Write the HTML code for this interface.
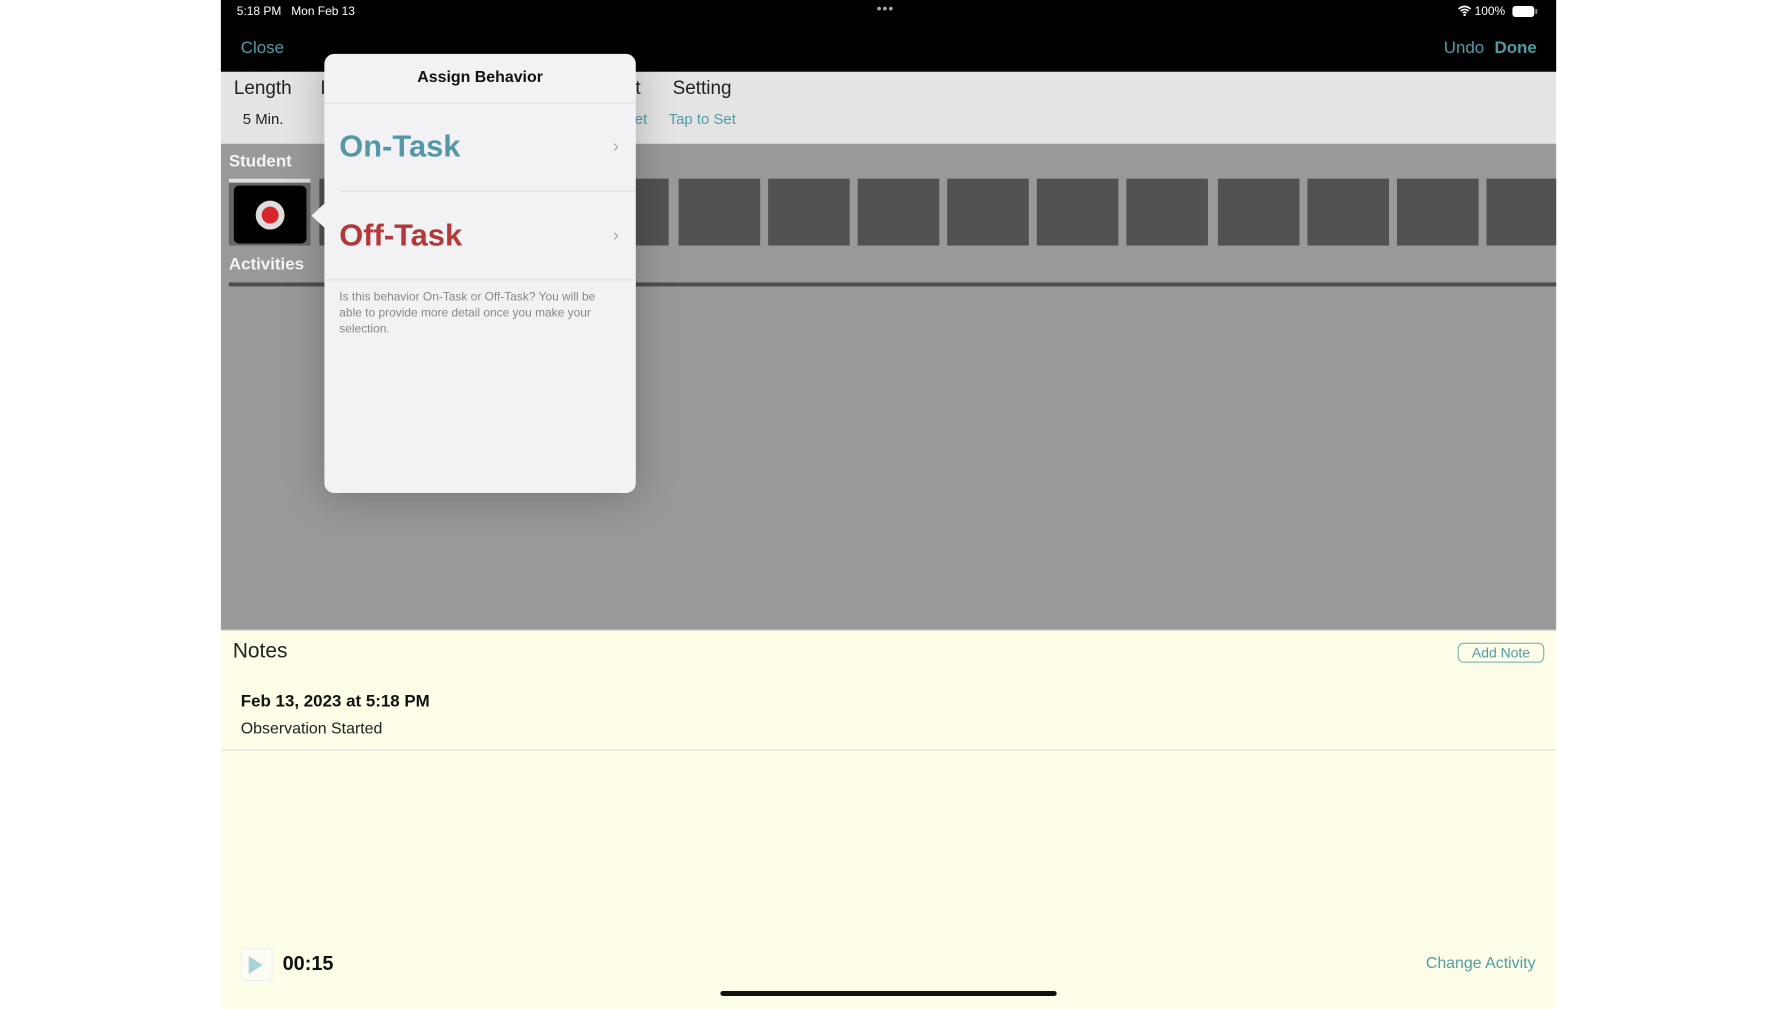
<!DOCTYPE html>
<html><head><meta charset="utf-8"><style>
*{margin:0;padding:0;box-sizing:border-box}
body{width:1778px;height:1000px;background:#fff;position:relative;overflow:hidden;font-family:"Liberation Sans",sans-serif}
#w{position:absolute;left:0;top:0;width:1778px;height:1010px;transform:scale(0.995,0.998);transform-origin:0 0}
.a{position:absolute;white-space:nowrap}
.teal{color:#4f9ea6}
.tile{position:absolute;top:179px;width:82px;height:67px;background:#525252}
</style></head><body><div id="w">
<div class="a" style="left:222px;top:0;width:1342px;height:72px;background:#000"></div>
<div class="a" style="left:238px;top:4px;color:#fff;font-size:12px">5:18 PM&nbsp;&nbsp;&nbsp;Mon Feb 13</div>
<div class="a" style="left:881px;top:0px;color:#aaa;font-size:14px;letter-spacing:1px">•••</div>
<div class="a" style="left:1482px;top:4px;color:#fff;font-size:12px">100%</div>
<svg class="a" style="left:1465px;top:5px" width="14" height="11" viewBox="0 0 14 11"><path d="M1 4Q7-1 13 4M3 6Q7 3 11 6M5 8Q7 6.5 9 8" stroke="#fff" stroke-width="1.6" fill="none"/><circle cx="7" cy="10" r="1.2" fill="#fff"/></svg>
<div class="a" style="left:1520px;top:6px;width:22px;height:11px;background:#fff;border-radius:3px"></div>
<div class="a" style="left:1543px;top:9px;width:2px;height:5px;background:#888"></div>
<div class="a teal" style="left:242px;top:38px;font-size:17px">Close</div>
<div class="a teal" style="left:1451px;top:38px;font-size:17px">Undo</div>
<div class="a teal" style="left:1502px;top:38px;font-size:17px;font-weight:bold">Done</div>

<div class="a" style="left:222px;top:72px;width:1342px;height:72px;background:#e4e4e4"></div>
<div class="a" style="left:235px;top:78px;font-size:19px;color:#222">Length</div>
<div class="a" style="left:322px;top:78px;font-size:19px;color:#222">I</div>
<div class="a" style="left:244px;top:111px;font-size:15px;color:#222">5 Min.</div>
<div class="a" style="left:628px;top:78px;font-size:19px;color:#222">nt</div>
<div class="a" style="left:676px;top:78px;font-size:19px;color:#222">Setting</div>
<div class="a teal" style="left:638px;top:111px;font-size:15px">et</div>
<div class="a teal" style="left:672px;top:111px;font-size:15px">Tap to Set</div>

<div class="a" style="left:222px;top:144px;width:1342px;height:488px;background:#999"></div>
<div class="a" style="left:230px;top:152px;font-size:17px;font-weight:bold;color:#f4f4f4">Student</div>
<div class="a" style="left:230px;top:179px;width:82px;height:67px;background:#666"></div>
<div class="a" style="left:230px;top:179px;width:82px;height:4px;background:#ddd"></div>
<div class="a" style="left:235px;top:186px;width:73px;height:58px;background:#000;border-radius:5px"></div>
<div class="a" style="left:257px;top:201px;width:29px;height:29px;border-radius:50%;background:#ddd"></div>
<div class="a" style="left:263px;top:207px;width:17px;height:17px;border-radius:50%;background:#d8262c"></div>
<div class="tile" style="left:321px"></div>
<div class="tile" style="left:592px;width:80px"></div>
<div class="tile" style="left:682px"></div><div class="tile" style="left:772px"></div><div class="tile" style="left:862px"></div><div class="tile" style="left:952px"></div><div class="tile" style="left:1042px"></div><div class="tile" style="left:1132px"></div><div class="tile" style="left:1224px"></div><div class="tile" style="left:1314px"></div><div class="tile" style="left:1404px"></div><div class="tile" style="left:1494px;width:70px"></div>
<div class="a" style="left:230px;top:255px;font-size:17px;font-weight:bold;color:#f4f4f4">Activities</div>
<div class="a" style="left:230px;top:283px;width:1334px;height:4px;background:#4e4e4e"></div>

<div class="a" style="left:222px;top:631px;width:1342px;height:380px;background:#fdfde8;border-top:1px solid #ccc"></div>
<div class="a" style="left:234px;top:641px;font-size:21px;color:#222">Notes</div>
<div class="a teal" style="left:1465px;top:644px;width:87px;height:20px;border:1px solid #6aaab0;border-radius:6px;font-size:14px;text-align:center;line-height:18px">Add Note</div>
<div class="a" style="left:242px;top:693px;font-size:17px;font-weight:bold;color:#111">Feb 13, 2023 at 5:18 PM</div>
<div class="a" style="left:242px;top:722px;font-size:16px;color:#222">Observation Started</div>
<div class="a" style="left:222px;top:751px;width:1342px;height:1px;background:#ddd"></div>
<div class="a" style="left:242px;top:950px;width:32px;height:33px;border:1px solid #eee;border-radius:3px;background:#fcfcf4"></div>
<div class="a" style="left:250px;top:958px;width:0;height:0;border-left:14px solid #a9d3d8;border-top:9px solid transparent;border-bottom:9px solid transparent"></div>
<div class="a" style="left:284px;top:955px;font-size:20px;font-weight:bold;color:#111">00:15</div>
<div class="a teal" style="left:1433px;top:957px;font-size:16px">Change Activity</div>
<div class="a" style="left:724px;top:993px;width:338px;height:5px;border-radius:3px;background:#111"></div>

<div class="a" style="left:326px;top:54px;width:313px;height:440px;background:#f2f2f4;border-radius:10px;box-shadow:0 4px 40px rgba(0,0,0,.25)"></div>
<div class="a" style="left:313px;top:203px;width:0;height:0;border-right:14px solid #f2f2f4;border-top:13px solid transparent;border-bottom:13px solid transparent"></div>
<div class="a" style="left:326px;top:69px;width:313px;text-align:center;font-size:16px;font-weight:bold;color:#111">Assign Behavior</div>
<div class="a" style="left:326px;top:103px;width:313px;height:1px;background:#ddd"></div>
<div class="a" style="left:341px;top:129px;font-size:31px;font-weight:bold;color:#5497a6">On-Task</div>
<div class="a" style="left:616px;top:136px;font-size:18px;color:#aaa">›</div>
<div class="a" style="left:342px;top:191px;width:297px;height:1px;background:#ddd"></div>
<div class="a" style="left:341px;top:218px;font-size:31px;font-weight:bold;color:#b2383a">Off-Task</div>
<div class="a" style="left:616px;top:225px;font-size:18px;color:#aaa">›</div>
<div class="a" style="left:326px;top:280px;width:313px;height:1px;background:#ddd"></div>
<div class="a" style="left:341px;top:289px;font-size:12px;line-height:16px;color:#888;white-space:normal;width:280px">Is this behavior On-Task or Off-Task? You will be able to provide more detail once you make your selection.</div>
</div></body></html>
